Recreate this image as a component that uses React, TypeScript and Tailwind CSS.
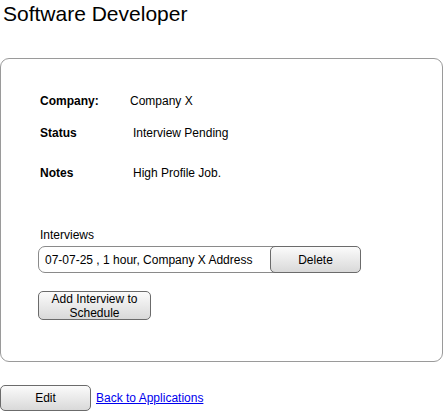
import React from 'react';

const btn =
  'border border-[#6b6b6b] rounded-[5px] bg-gradient-to-b from-[#fbfbfb] to-[#d9d9d9] text-[12px] text-black leading-[14px]';

const App: React.FC = () => {
  return (
    <div className="w-[443px] h-[411px] bg-white text-black font-['Liberation_Sans',Arial,sans-serif] overflow-hidden">
      <h1 className="text-[21px] leading-[24px] pl-[3px] pt-[2px]">Software Developer</h1>

      <div className="mt-[32px] h-[304px] border border-[#9a9a9a] rounded-[9px] pl-[37px] pt-[35px]">
        {/* Details */}
        <div className="text-[12px] leading-[14px]">
          <div className="flex h-[14px] items-center">
            <span className="w-[92px] pl-[2px] font-bold">Company:</span>
            <span>Company X</span>
          </div>
          <div className="flex h-[14px] items-center mt-[18px]">
            <span className="w-[95px] pl-[2px] font-bold">Status</span>
            <span>Interview Pending</span>
          </div>
          <div className="flex h-[14px] items-center mt-[26px]">
            <span className="w-[95px] pl-[2px] font-bold">Notes</span>
            <span>High Profile Job.</span>
          </div>
        </div>

        {/* Interviews */}
        <div className="mt-[48px] pl-[2px] text-[12px] leading-[14px]">Interviews</div>
        <div className="mt-[4px] w-[323px] h-[27px] border border-[#8a8a8a] rounded-[7px] flex items-center justify-between">
          <span className="pl-[6px] text-[12px]">07-07-25 , 1 hour, Company X Address</span>
          <button className={`${btn} w-[91px] h-[27px] -mr-px`}>Delete</button>
        </div>

        <button className={`${btn} mt-[18px] w-[113px] h-[29px] flex flex-col items-center justify-center`}>
          <span>Add Interview to</span>
          <span>Schedule</span>
        </button>
      </div>

      <div className="mt-[23px] flex items-center gap-[5px]">
        <button className={`${btn} w-[91px] h-[26px]`}>Edit</button>
        <a href="#" className="text-[12px] text-[#0000ee] underline">Back to Applications</a>
      </div>
    </div>
  );
};

export default App;
